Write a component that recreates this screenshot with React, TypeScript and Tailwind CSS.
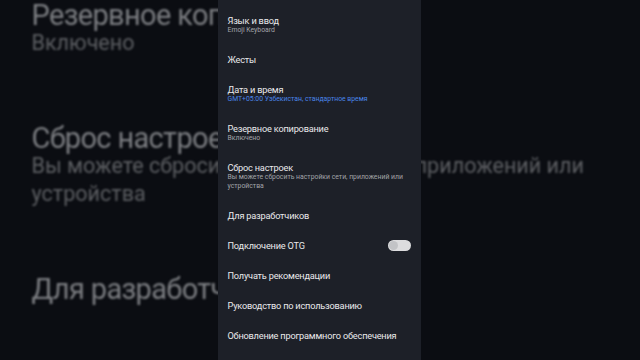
import React from 'react';

type Item = {
  title: string;
  sub?: string[];
  blue?: boolean;
  toggle?: boolean;
};

const items: Item[] = [
  { title: 'Язык и ввод', sub: ['Emoji Keyboard'] },
  { title: 'Жесты' },
  { title: 'Дата и время', sub: ['GMT+05:00 Узбекистан, стандартное время'], blue: true },
  { title: 'Резервное копирование', sub: ['Включено'] },
  { title: 'Сброс настроек', sub: ['Вы можете сбросить настройки сети, приложений или', 'устройства'] },
  { title: 'Для разработчиков' },
  { title: 'Подключение OTG', toggle: true },
  { title: 'Получать рекомендации' },
  { title: 'Руководство по использованию' },
  { title: 'Обновление программного обеспечения' },
];

const SettingsList: React.FC<{ dim?: boolean }> = ({ dim }) => {
  const titleColor = dim ? 'text-[#7c7e82]' : 'text-[#e9e9eb]';
  const subColor = dim ? 'text-[#5d5f63]' : 'text-[#a3a5a9]';
  const blueColor = dim ? 'text-[#2f4f80]' : 'text-[#4a86e8]';

  return (
    <div className="flex flex-col gap-[19px] pt-[15px] pl-[10px] pr-[10px]">
      {items.map((item) => (
        <div key={item.title} className="flex items-center justify-between">
          <div className="flex flex-col">
            <div className={`text-[9.2px] leading-[11px] tracking-[-0.2px] whitespace-nowrap ${titleColor}`}>
              {item.title}
            </div>
            {item.sub?.map((line) => (
              <div
                key={line}
                className={`text-[6.85px] leading-[9px] whitespace-nowrap ${item.blue ? blueColor : subColor}`}
              >
                {line}
              </div>
            ))}
          </div>
          {item.toggle && (
            <div
              className={`flex items-center w-[23px] h-[11px] rounded-full px-[1px] ${
                dim ? 'bg-[#6a6c70]' : 'bg-[#dcdcde]'
              }`}
            >
              <div className={`w-[9px] h-[9px] rounded-full ${dim ? 'bg-[#5a5c60]' : 'bg-[#c2c3c6]'}`} />
            </div>
          )}
        </div>
      ))}
    </div>
  );
};

export default function App() {
  return (
    <div
      className="relative w-[640px] h-[360px] overflow-hidden bg-[#0b0d12]"
      style={{ fontFamily: 'Roboto, "Noto Sans", sans-serif' }}
    >
      {/* blown-up backdrop copy of the phone screen */}
      <div className="absolute left-0 top-0 w-[203px] h-[360px] origin-top-left scale-[3.15] -translate-y-[391px] blur-[0.3px]">
        <SettingsList dim />
      </div>

      {/* phone screen */}
      <div className="relative flex justify-center h-full">
        <div className="w-[203px] h-full bg-[#1d2028] ml-[-2px]">
          <SettingsList />
        </div>
      </div>
    </div>
  );
}
